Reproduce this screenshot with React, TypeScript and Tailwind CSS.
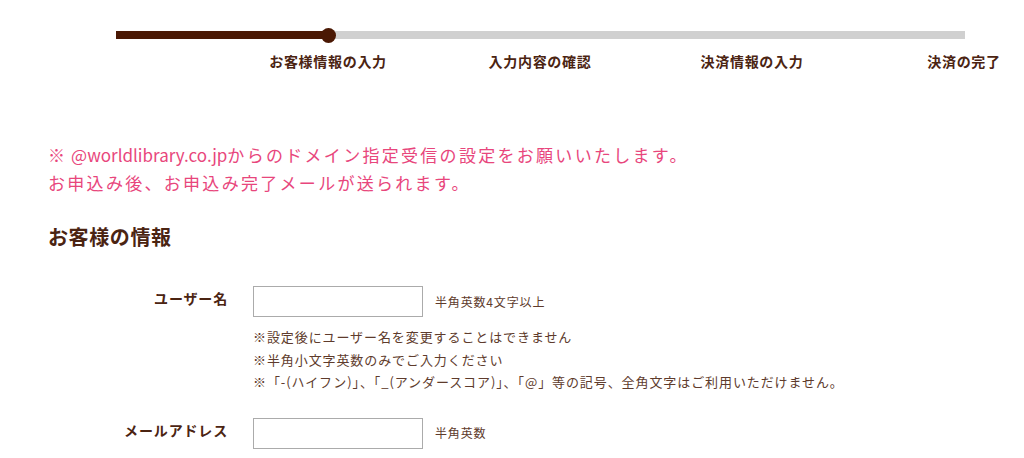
const STEPS = ["お客様情報の入力", "入力内容の確認", "決済情報の入力", "決済の完了"];

const NOTES = [
  "※設定後にユーザー名を変更することはできません",
  "※半角小文字英数のみでご入力ください",
  "※「-(ハイフン)」、「_(アンダースコア)」、「@」等の記号、全角文字はご利用いただけません。",
];

function Progress() {
  return (
    <div className="pt-[31px]">
      <div className="relative ml-[116px] h-[8px] w-[849px] bg-[#d0d0d0]">
        <div className="absolute left-0 top-0 h-[8px] w-[212px] bg-[#4a1804]" />
        <div className="absolute left-[205px] top-[-3.5px] h-[15px] w-[15px] rounded-full bg-[#4a1804]" />
      </div>
      <div className="mt-[12px] flex pl-[222px]">
        {STEPS.map((s) => (
          <div
            key={s}
            className="w-[212px] shrink-0 text-center text-[14px] font-bold leading-[20px] tracking-[0.05em] text-[#4b2412]"
          >
            {s}
          </div>
        ))}
      </div>
    </div>
  );
}

function Field({ label, hint, children }: { label: string; hint: string; children?: React.ReactNode }) {
  return (
    <div className="flex items-start">
      <div className="w-[180px] shrink-0 pt-[1px] text-right text-[14px] font-bold leading-[22px] tracking-[0.06em] text-[#4b2412]">
        {label}
      </div>
      <div className="ml-[25px]">
        <div className="flex items-center">
          <input type="text" className="h-[31px] w-[170px] border border-[#ababab] bg-white" />
          <span className="ml-[12px] text-[12px] tracking-[0.07em] text-[#5e3b2c]">{hint}</span>
        </div>
        {children}
      </div>
    </div>
  );
}

export default function App() {
  return (
    <div className="h-[458px] w-[1024px] overflow-hidden bg-white font-['Noto_Sans_CJK_JP','Noto_Sans',sans-serif]">
      <Progress />
      <div className="pl-[48px] pt-[70px]">
        <p className="text-[17px] leading-[28px] tracking-[0.135em] text-[#e8467c]">
          ※<span className="tracking-normal"> @worldlibrary.co.jp</span>からのドメイン指定受信の設定をお願いいたします。
          <br />
          お申込み後、お申込み完了メールが送られます。
        </p>
        <h2 className="mt-[25px] text-[20px] font-bold leading-[30px] tracking-[0.03em] text-[#4b2412]">
          お客様の情報
        </h2>
        <div className="mt-[34px] flex flex-col gap-[24px]">
          <Field label="ユーザー名" hint="半角英数4文字以上">
            <div className="mt-[9px] text-[13px] leading-[22.5px] tracking-[0.07em] text-[#5e3b2c]">
              {NOTES.map((n) => (
                <div key={n}>{n}</div>
              ))}
            </div>
          </Field>
          <Field label="メールアドレス" hint="半角英数" />
        </div>
      </div>
    </div>
  );
}
